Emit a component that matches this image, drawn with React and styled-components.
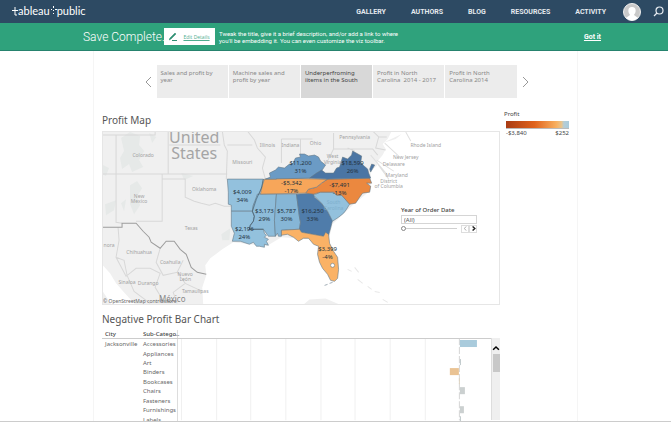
import React from "react";
import styled, { createGlobalStyle } from "styled-components";

const Global = createGlobalStyle`
  * { box-sizing: border-box; }
  body { margin: 0; background: #fff; font-family: "Noto Sans", "Open Sans", sans-serif; font-size: 6px; color: #555; }
  button, input { font: inherit; padding: 0; margin: 0; border: 0; background: none; border-radius: 0; }
  h1, h2, p, ul { margin: 0; padding: 0; font-weight: 400; }
`;

const Shell = styled.div`
  height: calc(100vh - 3px);
  display: flex;
  flex-direction: column;
  overflow: hidden;
  border-bottom: 1px solid #ccc;
`;

const Header = styled.header`
  height: 23px;
  flex: none;
  margin-right: 3px;
  padding: 0 4px 0 12px;
  display: flex;
  align-items: center;
  justify-content: space-between;
  background: #2d4a63;
  color: #fff;
`;

const Logo = styled.a`
  display: flex;
  align-items: center;
  height: 23px;
  padding-bottom: 2px;
  color: #fff;
  text-decoration: none;
  font: 11px/12px Lato, sans-serif;
  svg { display: block; }
`;

const Nav = styled.nav`
  display: flex;
  align-items: center;
  gap: 25px;
  font: 700 7px/8px Roboto, sans-serif;
`;

const NavLink = styled.a`
  color: #e4e9ee;
  text-decoration: none;
`;

const Tools = styled.div`
  display: flex;
  align-items: center;
  gap: 12px;
  margin-left: -8px;
  svg { display: block; }
`;

const IconButton = styled.button`
  display: block;
  color: inherit;
`;

const Banner = styled.section`
  height: 28px;
  flex: none;
  margin-right: 3px;
  padding: 0 67px 0 83px;
  display: flex;
  align-items: center;
  background: #2fa27c;
  border-bottom: 1px solid #26836e;
  color: #fff;
`;

const BannerTitle = styled.h1`
  font: 300 12px/16px Roboto, sans-serif;
  width: 81px;
  white-space: nowrap;
`;

const EditButton = styled.button`
  height: 17px;
  width: 51px;
  display: flex;
  align-items: center;
  justify-content: center;
  gap: 6px;
  background: #fff;
  color: #4fae90;
  font: 5px/8px "Open Sans", sans-serif;
  text-decoration: underline;
  white-space: nowrap;
`;

const BannerText = styled.p`
  margin-left: 4px;
  flex: 1;
  font: 6px/7px Roboto, sans-serif;
`;

const GotIt = styled.button`
  color: #fff;
  font: 700 7px/8px Roboto, sans-serif;
  text-decoration: underline;
`;

const Stage = styled.main`
  flex: 1;
  min-height: 0;
  width: 100%;
  max-width: 485px;
  margin: 0 auto;
  padding: 14px 0 0 8px;
  border-left: 1px solid #f5f5f5;
  border-right: 1px solid #f5f5f5;
  overflow: hidden;
`;

const Story = styled.div`
  display: flex;
  justify-content: center;
  align-items: center;
  gap: 5px;
  padding-right: 6px;
  svg { display: block; }
`;

const Tabs = styled.div`
  display: flex;
  gap: 1px;
  flex: 0 1 360px;
`;

const Tab = styled.button`
  flex: 1;
  height: 33px;
  padding: 5px 4px;
  text-align: left;
  display: flex;
  font-size: 6px;
  line-height: 7px;
  white-space: pre;
  background: ${(p) => (p.$active ? "#d8d8d8" : "#ececec")};
  color: ${(p) => (p.$active ? "#444" : "#888")};
`;

const Dashboard = styled.div`
  display: grid;
  grid-template-columns: minmax(0, 1fr) 75px;
  column-gap: 2px;
  padding-top: 11px;
`;

const Title = styled.h2`
  font-size: 10px;
  line-height: 22px;
  color: #555;
`;

const ChartTitle = styled(Title)`
  padding-top: 3px;
`;

const MapPanel = styled.div`
  position: relative;
  border: 1px solid #e6e6e6;
  & > svg { display: block; width: 100%; }
`;

const YearFilter = styled.div`
  position: absolute;
  left: 298px;
  top: 74px;
  width: 76px;
`;

const FilterLabel = styled.label`
  display: block;
  font-weight: 500;
  line-height: 8px;
  color: #444;
  margin-bottom: 1px;
`;

const FilterValue = styled.input`
  display: block;
  width: 100%;
  height: 9px;
  padding: 0 2px;
  border: 1px solid #d5d5d5;
  color: #555;
  background: #fff;
`;

const SliderRow = styled.div`
  display: flex;
  align-items: center;
  height: 9px;
`;

const Slider = styled.input`
  appearance: none;
  flex: 1;
  min-width: 0;
  height: 5px;
  margin-right: 4px;
  background: linear-gradient(#d0d0d0, #d0d0d0) center / 100% 1px no-repeat;
  &::-webkit-slider-thumb {
    appearance: none;
    width: 5px;
    height: 5px;
    border: 1px solid #888;
    border-radius: 50%;
    background: #fff;
  }
`;

const StepButton = styled.button`
  width: 8px;
  height: 8px;
  border: 1px solid #ddd;
  display: grid;
  place-items: center;
  color: ${(p) => (p.$muted ? "#aaa" : "#222")};
`;

const Legend = styled.aside`
  padding-left: 4px;
  color: #444;
`;

const LegendTitle = styled.p`
  margin-left: -2px;
  font-size: 6px;
  line-height: 8px;
  padding-top: 1px;
`;

const Ramp = styled.div`
  width: 63px;
  height: 8px;
  margin-top: 3px;
  background: linear-gradient(90deg, #a93c14, #e0621c 45%, #f8b060 80%, #e9c48c 88%, #b5cdd6 92%, #a9cbdc);
  border-bottom: 1px solid #bbb;
`;

const RampEnds = styled.div`
  width: 63px;
  display: flex;
  justify-content: space-between;
  line-height: 8px;
`;

const ChartPanel = styled.section`
  display: grid;
  grid-template-columns: 76px minmax(0, 1fr) 9px;
  align-items: start;
  svg { display: block; width: 100%; }
`;

const PlotCell = styled.div`
  padding-top: 8px;
`;

const Table = styled.table`
  width: 100%;
  height: 94px;
  table-layout: fixed;
  border-collapse: collapse;
  border-right: 1px solid #ddd;
  font-size: 6px;
  line-height: 8px;
  color: #666;
  th, td { padding: 0; text-align: left; white-space: nowrap; vertical-align: middle; }
  thead th { height: 8px; font-weight: 500; color: #444; border-bottom: 1px solid #ccc; }
  tr > :first-child { width: 41px; padding-left: 3px; }
  tbody th { font-weight: 400; }
`;

const Scrollbar = styled.div`
  margin-top: 8px;
  height: 82px;
  background: #efefef;
  border-left: 1px solid #ddd;
  display: flex;
  flex-direction: column;
`;

const ScrollUp = styled.button`
  height: 16px;
  width: 8px;
  padding-top: 4px;
`;

const Thumb = styled.div`
  height: 18px;
  margin-left: 1px;
  background: #c8c8c8;
`;

const tabs = [
  "Sales and profit by\nyear",
  "Machine sales and\nprofit by year",
  "Underperfroming\niitems in the South",
  "Profit in North\nCarolina  2014 - 2017",
  "Profit in North\nCarolina 2014",
];

const blue = "#93c1dd";
const states = [
  { fill: blue, d: "M227 179L263 179 262 182 264 184 261 188 259 194 256 199 253 205 252 211 231 211 231 205 228 204 228 192Z" },
  { fill: blue, d: "M231 211L252 211 254 216 253 221 250 225 249 229 263 229 264 233 266 235 264 237 268 239 266 241 268 245 264 244 264 247 259 246 256 246 253 242 249 244 240 241 232 241 234 233 231 226Z" },
  { fill: "#8dbcda", d: "M257 194L276 194 274 220 275 236 268 236 263 229 249 229 250 225 253 221 254 216 252 211 253 205Z" },
  { fill: "#86b6d6", d: "M276 194L296 194 299 217 300 222 299 229 281 230 281 236 278 236 277 233 275 236 274 220Z" },
  { fill: "#4f7caa", d: "M296 194L313 193 314 197 321 203 327 211 332 220 330 228 328 235 325 233 323 236 301 232 299 229 300 222 299 217Z" },
  { fill: blue, d: "M313 195L320 192 333 192 336 195 341 195 349 204 346 209 343 213 338 217 332 221 327 211 321 203Z" },
  { fill: "#eb883f", d: "M327 179L369 178 371 183 366 183 370 186 369 192 362 193 359 197 355 203 349 204 341 195 336 195 333 192 320 192 313 194 305 193 308 189 316 187 321 183Z" },
  { fill: "#f7a65a", d: "M264 179L276 179 276 178 327 179 321 183 316 187 308 189 305 193 260 194 262 185Z" },
  { fill: "#6b9bc5", d: "M265 179L270 177 269 173 275 170 278 167 284 168 289 164 292 164 295 158 300 157 299 154 304 154 308 156 314 155 318 157 320 161 325 165 321 171 316 175 309 178Z" },
  { fill: "#4a75a4", d: "M309 178L316 173 321 170 325 173 333 173 336 168 339 167 342 157 347 159 351 155 352 151 361 156 360 163 367 169 368 173 370 178 327 179Z" },
  { fill: "#4a75a4", d: "M371 164L374 165 370 172 369 169Z" },
  { fill: "#fab266", d: "M281 230L299 229 301 232 323 236 325 232 328 234 329 243 333 251 337 257 338 269 337 278 334 281 330 280 327 274 322 268 319 262 317 254 318 246 313 244 308 238 303 238 298 241 293 237 287 234 281 235Z" },
];

const places = [
  [143, 157, "Colorado"], [139, 198, "New"], [139, 203, "Mexico"], [204, 191, "Oklahoma"],
  [191, 230, "Texas"], [139, 254, "Chihuahua"], [170, 264, "Coahuila"], [185, 276, "Nuevo"],
  [185, 281, "León"], [127, 284, "Sinaloa"], [148, 285, "Durango"], [195, 293, "Tamaulipas"],
  [242, 164, "Missouri"], [267, 147, "Illinois"], [290, 147, "Indiana"], [315, 145, "Ohio"],
  [354, 139, "Pennsylvania"], [332, 158, "West"], [332, 164, "Virginia"], [425, 147, "Rhode Island"],
  [405, 159, "New Jersey"], [393, 166, "Delaware"], [396, 177, "Maryland"], [388, 183, "District"],
  [388, 188, "of Columbia"], [109, 247, "nora"],
];

const marks = [
  [300, 165, "$11,200", "31%"], [352, 165, "$18,599", "26%"], [291, 185, "-$5,342", "-17%"],
  [339, 187, "-$7,491", "-13%"], [242, 194, "$4,009", "34%"], [264, 213, "$3,173", "29%"],
  [286, 213, "$5,787", "30%"], [312, 213, "$16,250", "33%"], [244, 231, "$2,196", "24%"],
  [327, 251, "$3,399", "-4%"],
];

const rows = ["Accessories", "Appliances", "Art", "Binders", "Bookcases", "Chairs", "Fasteners", "Furnishings", "Labels"];

const bars = [
  [281, 2, 17, 7, "#a9cbdc"], [281, 21, 1, 6, "#bcc6c8"], [271, 30, 9, 7, "#eac394"],
  [280, 40, 1, 6, "#ddd2c0"], [281, 49, 5, 7, "#cbd0d0"], [281, 68, 4, 7, "#cbd0d0"], [281, 78, 1, 6, "#bcc6c8"],
];

function Chevron({ size = 10, dir = "left", stroke = 1 }) {
  const d = { left: "M7 1L2 5.500 7 10", right: "M3 1L8 5.500 3 10", up: "M1 8L5 4 9 8" }[dir];
  return (
    <svg width={size} height={size} viewBox="0 0 10 11" fill="none" stroke="currentColor" strokeWidth={stroke} aria-hidden="true">
      <path d={d} />
    </svg>
  );
}

function StoryArrow({ dir }) {
  return (
    <svg width="7" height="12" viewBox="0 0 7 12" fill="none" stroke="#999" aria-hidden="true">
      <path d={dir === "left" ? "M6 1L1 6L6 11" : "M1 1L6 6L1 11"} />
    </svg>
  );
}

function ProfitMap() {
  return (
    <svg viewBox="103 132 395 172" role="img" aria-label="Profit by state">
      <rect x="102" y="131" width="397" height="174" fill="#fff" />
      <path fill="#f0f0f0" d="M102 131H391L387 139 382 144 385 149 382 155 377 161 376 166 370 171 370 190 352 205 332 224 328 240 310 239 281 237 266 246 233 242 222 249 210 258 205 265 206 275 202 287 203 305H136L125 293 116 283 110 273 102 264Z" />
      <path fill="#efefef" d="M382 143L401 134 395 139ZM302 305L309 299 325 298 341 305ZM102 290L112 305H102Z" />
      <g fill="#e6e9e8">
        <path d="M121 138L130 132 140 136 139 145 144 151 139 160 143 167 132 172 129 164 122 169 120 158 124 151Z" />
        <path d="M130 185L137 181 142 188 137 196 140 205 134 214 130 204ZM121 203L126 199 124 211ZM103 165L109 168 106 176 102 174ZM105 204L116 200 114 210 106 215Z" />
        <path d="M149 133L156 137 152 143ZM221 234L230 228 229 240 222 240ZM181 173L193 176 184 180Z" />
      </g>
      <g fill="none" stroke="#d8d8d8">
        <path d="M102 174H227M116 135V222L122 223M102 135H155V131M168 131V174M169 145H220M162 174V221H136M162 179H185V197L194 201 201 203 209 205 215 203 224 206 231 206M222 131L224 145 227 151 226 179M227 145H252M247 131L254 140 257 148 265 157 262 168 265 179M281 139V163M300 139V156M281 139H312M333 133V149H372L377 155M333 149L325 165M347 148L354 151M372 131L378 137 375 148 385 150M378 137H386M118 227L119 240 116 257 126 276 136 268 150 268 160 273 155 287 163 300M160 248L156 262 163 275 177 272 185 283 202 291M116 257L124 260 127 275 134 291 150 303M177 272L183 260M185 283L173 292 177 303" />
        <path stroke="#e0e0e0" d="M370 155L386 174M376 160L393 171M384 143L398 156M405 132L410 141M377 164L388 179" />
      </g>
      <path fill="none" stroke="#9c9c9c" d="M102 227H122V223H136L143 231 149 237 151 242 160 248 166 241H174L180 249 186 254 191 267 197 272 206 274" />
      <g stroke="#647987" strokeWidth=".6" strokeLinejoin="round">
        {states.map((s) => <path key={s.d} d={s.d} fill={s.fill} />)}
        <path d="M263 179L261 188 256 199 252 211 254 216 253 221 250 225 249 229 263 229" fill="none" stroke="#3c5262" />
        <circle cx="332" cy="265" r="2" fill="#fff" />
        <path d="M324 285L327 284M329 283L332 282" />
      </g>
      <g fill="#a5a5a5" fontSize="16" textAnchor="middle">
        <text x="194" y="143">United</text>
        <text x="194" y="159">States</text>
      </g>
      <g fill="#a2a2a2" fontSize="5" textAnchor="middle">
        {places.map(([x, y, t]) => <text key={t} x={x} y={y}>{t}</text>)}
        <text x="333" y="204" fill="#7fb0cd">South</text>
        <text x="333" y="210" fill="#7fb0cd">Carolina</text>
        <text x="172" y="302" fontSize="8" fill="#888">México</text>
      </g>
      <text x="103" y="303" fontSize="5" fill="#666">© OpenStreetMap contributors</text>
      <g fill="#24323d" fontSize="6" textAnchor="middle">
        {marks.map(([x, y, value, pct]) => (
          <text key={value} x={x} y={y}>{value}<tspan x={x} dy="8">{pct}</tspan></text>
        ))}
      </g>
      <path d="M347 269L351 271M354 267L358 272M357 279L362 283M367 286L371 289M374 291L379 292M382 299L387 302" stroke="#e8e8e8" fill="none" />
    </svg>
  );
}

function BarPlot() {
  return (
    <svg viewBox="0 0 312 82" role="img" aria-label="Profit by sub-category">
      <g stroke="#f0f0f0">
        {[3, 38, 72, 107, 142, 176, 211, 246].map((x) => <path key={x} d={`M${x}.5 0V82`} />)}
      </g>
      <path d="M280.5 0V82" stroke="#d5d5d5" strokeDasharray="7 2" />
      <path d="M0 .5H312" stroke="#ccc" />
      {bars.map(([x, y, w, h, c]) => <rect key={y} x={x} y={y} width={w} height={h} fill={c} />)}
    </svg>
  );
}

export default function App() {
  return (
    <Shell>
      <Global />
      <Header>
        <Logo href="#home" aria-label="Tableau Public">
          <svg width="6" height="12" viewBox="0 0 6 12" stroke="#fff" fill="none"><path d="M3 2V10H5M0 5.500H6" /></svg>
          <span>ableau</span>
          <svg width="7" height="12" viewBox="0 0 7 12" fill="#fff"><path d="M3 1H4V3H3ZM1 4H2V5H1ZM3 5H4V6H3ZM5 4H7V5H5ZM3 8H4V9H3Z" /></svg>
          <span>public</span>
        </Logo>
        <Nav>
          {["GALLERY", "AUTHORS", "BLOG", "RESOURCES", "ACTIVITY"].map((n) => (
            <NavLink key={n} href={`#${n.toLowerCase()}`}>{n}</NavLink>
          ))}
          <Tools>
            <IconButton aria-label="Profile">
              <svg width="18" height="18" viewBox="0 0 18 18">
                <circle cx="9" cy="9" r="8.500" fill="#c9c9c9" stroke="#eee" />
                <path d="M9 4C12 4 13 6 12.500 9C12 11 11 11 11 12L15 15Q9 20 3 15L7 12C7 11 6 11 5.500 9C5 6 6 4 9 4Z" fill="#fff" />
              </svg>
            </IconButton>
            <IconButton aria-label="Search">
              <svg width="11" height="11" viewBox="0 0 11 11" fill="none" stroke="#e8edf2" strokeWidth="1.200">
                <circle cx="6.500" cy="4.500" r="3.500" /><path d="M4 7L1 10" />
              </svg>
            </IconButton>
          </Tools>
        </Nav>
      </Header>
      <Banner>
        <BannerTitle>Save Complete.</BannerTitle>
        <EditButton>
          <svg width="8" height="9" viewBox="0 0 8 9" stroke="#2f8f73" fill="none" aria-hidden="true">
            <path d="M1 6L6 1L7 2L2 7L0 8Z" fill="#2f8f73" strokeWidth=".5" /><path d="M3 8.500H8" />
          </svg>
          Edit Details
        </EditButton>
        <BannerText>
          Tweak the title, give it a brief description, and/or add a link to where<br />
          you'll be embedding it. You can even customize the viz toolbar.
        </BannerText>
        <GotIt>Got it</GotIt>
      </Banner>
      <Stage>
        <Story>
          <IconButton aria-label="Previous"><StoryArrow dir="left" /></IconButton>
          <Tabs>
            {tabs.map((t, i) => <Tab key={t} $active={i === 2} aria-pressed={i === 2}>{t}</Tab>)}
          </Tabs>
          <IconButton aria-label="Next"><StoryArrow dir="right" /></IconButton>
        </Story>
        <Dashboard>
          <div>
            <Title>Profit Map</Title>
            <MapPanel>
              <ProfitMap />
              <YearFilter>
                <FilterLabel htmlFor="year">Year of Order Date</FilterLabel>
                <FilterValue id="year" defaultValue="(All)" />
                <SliderRow>
                  <Slider type="range" min="0" max="4" defaultValue="0" aria-label="Year" />
                  <StepButton $muted aria-label="Previous year"><Chevron size={5} stroke={2} /></StepButton>
                  <StepButton aria-label="Next year"><Chevron size={5} dir="right" stroke={3} /></StepButton>
                </SliderRow>
              </YearFilter>
            </MapPanel>
            <ChartTitle>Negative Profit Bar Chart</ChartTitle>
            <ChartPanel>
              <Table>
                <thead><tr><th>City</th><th>Sub-Catego..</th></tr></thead>
                <tbody>
                  {rows.map((r, i) => <tr key={r}><th>{i === 0 ? "Jacksonville" : ""}</th><td>{r}</td></tr>)}
                </tbody>
              </Table>
              <PlotCell><BarPlot /></PlotCell>
              <Scrollbar>
                <ScrollUp aria-label="Scroll up"><Chevron size={8} dir="up" stroke={2} /></ScrollUp>
                <Thumb />
              </Scrollbar>
            </ChartPanel>
          </div>
          <Legend>
            <LegendTitle>Profit</LegendTitle>
            <Ramp />
            <RampEnds><span>-$3,840</span><span>$252</span></RampEnds>
          </Legend>
        </Dashboard>
      </Stage>
    </Shell>
  );
}
